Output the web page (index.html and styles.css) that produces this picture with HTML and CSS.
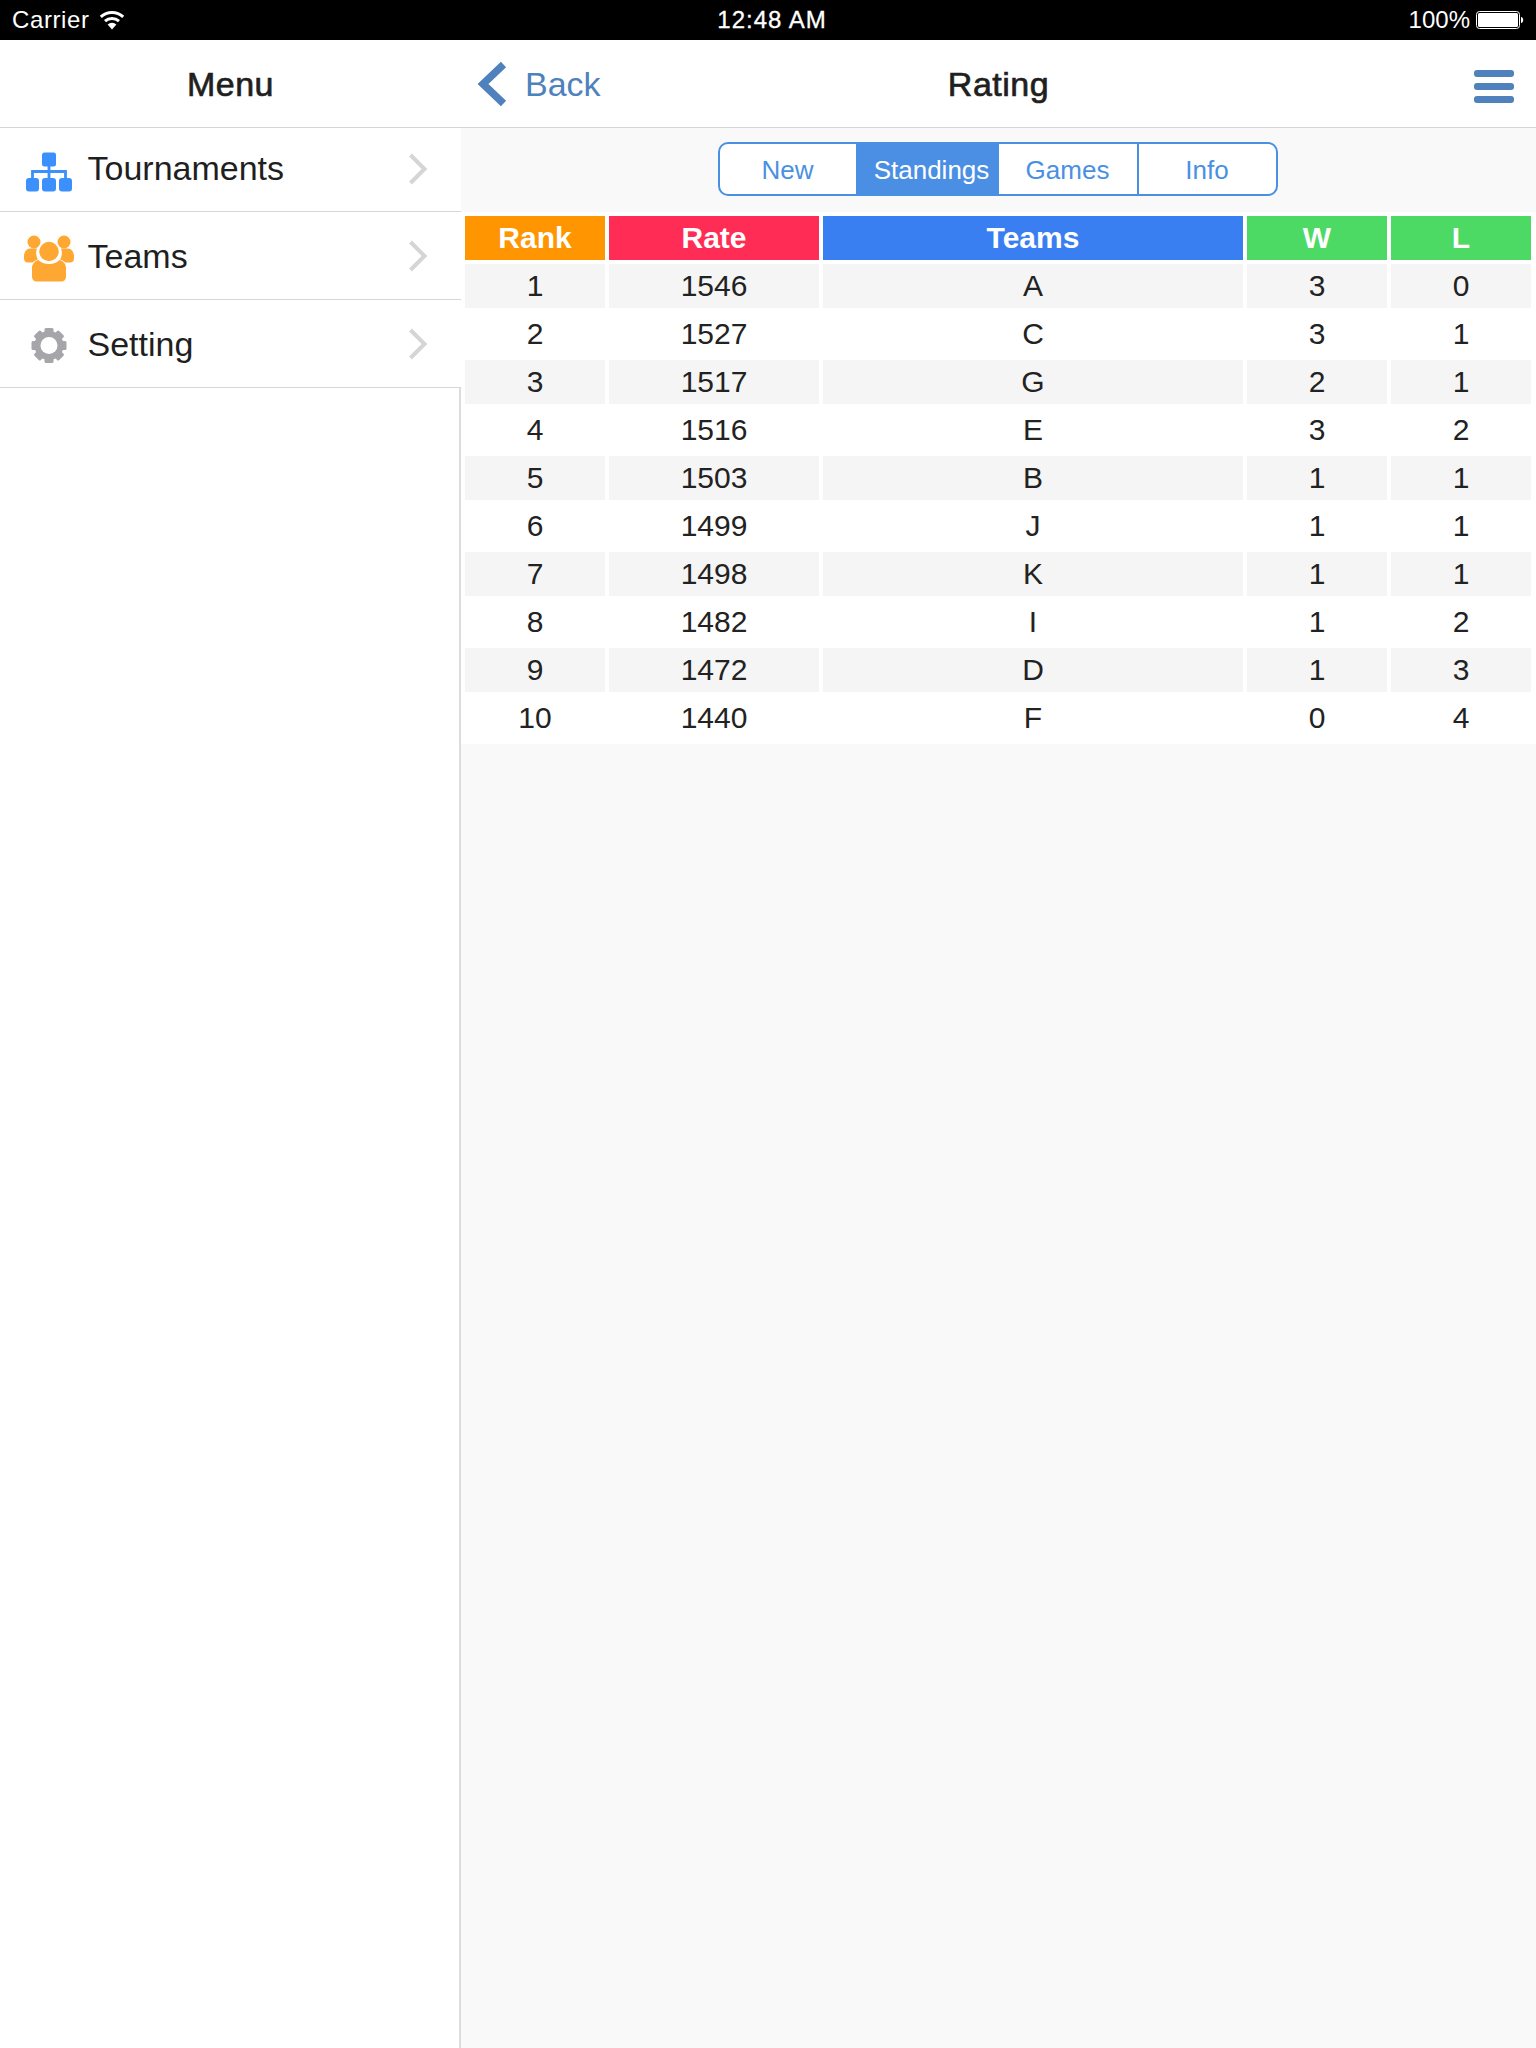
FILE: index.html
```html
<!DOCTYPE html>
<html lang="en">
<head>
<meta charset="utf-8">
<title>Rating</title>
<link rel="stylesheet" href="styles.css">
</head>
<body>
<div class="app">
  <header class="status">
    <div class="status-left">
      <span class="carrier">Carrier</span>
      <svg class="wifi" width="26" height="20" viewBox="0 0 26 20"><path d="M13 19.5 8.6 14.4a6.6 6.6 0 0 1 8.8 0Z" fill="#fff"/><path d="M6 11.2a10.500 10.500 0 0 1 14 0M1.800 6.800a16.500 16.500 0 0 1 22.400 0" fill="none" stroke="#fff" stroke-width="3"/></svg>
    </div>
    <span class="time">12:48 AM</span>
    <div class="status-right">
      <span class="percent">100%</span>
      <svg class="battery" width="50" height="20" viewBox="0 0 50 20"><rect x="1.500" y="1.500" width="43" height="17" rx="3" fill="none" stroke="#fff"/><rect x="3" y="3" width="40" height="14" rx="1.500" fill="#fff"/><path d="M46 7c1.400.3 2.200 1.400 2.200 3s-.8 2.700-2.200 3Z" fill="#fff"/></svg>
    </div>
  </header>
  <div class="columns">
    <aside class="side">
      <div class="nav nav-center"><h1 class="title">Menu</h1></div>
      <a class="row row-first">
        <span class="row-icon">
          <svg width="50" height="50" viewBox="0 0 50 50"><g fill="#3b90fb"><rect x="18" y="8.500" width="14" height="14" rx="2.500"/><rect x="2" y="34" width="13" height="13.500" rx="3"/><rect x="18" y="34" width="14" height="13.500" rx="3"/><rect x="35" y="34" width="13" height="13.500" rx="3"/></g><path d="M25 22v12M8.500 34v-6.500h33V34" fill="none" stroke="#3b90fb" stroke-width="2.800"/></svg>
        </span>
        <span class="row-label">Tournaments</span>
        <svg class="chev" width="20" height="32" viewBox="0 0 20 32"><path d="M2.500 2 16.500 16 2.500 30" fill="none" stroke="#d5d5d5" stroke-width="4"/></svg>
      </a>
      <a class="row">
        <span class="row-icon">
          <svg width="50" height="54" viewBox="0 0 50 54"><g fill="#ffa733"><circle cx="10" cy="13" r="6.500"/><circle cx="40" cy="13" r="6.500"/><path d="M0 27c0-4 3-7.500 6-7.500h7a13 13 0 0 0 2 12.500L13 33.500H4c-2.500 0-4-1.500-4-4Z"/><path d="M50 27c0-4-3-7.500-6-7.500h-7a13 13 0 0 1-2 12.500l2 1.500h9c2.500 0 4-1.500 4-4Z"/></g><circle cx="25" cy="22.500" r="11.200" fill="#fff"/><circle cx="25" cy="22.500" r="9.700" fill="#ffa733"/><path d="M7 39c0-4 2.500-7.500 7-8.500 2.500 2.800 6.500 4.200 11 4.200s8.500-1.400 11-4.200c4.500 1 7 4.500 7 8.500v9c0 3-2 5-5 5H12c-3 0-5-2-5-5Z" fill="#fff"/><path d="M8 39c0-4 2.500-7 6.500-8 2.500 2.500 6 4 10.500 4s8-1.500 10.500-4c4 1 6.500 4 6.500 8v8.500c0 3-2 5-5 5H13c-3 0-5-2-5-5Z" fill="#ffa733"/></svg>
        </span>
        <span class="row-label">Teams</span>
        <svg class="chev" width="20" height="32" viewBox="0 0 20 32"><path d="M2.500 2 16.500 16 2.500 30" fill="none" stroke="#d5d5d5" stroke-width="4"/></svg>
      </a>
      <a class="row">
        <span class="row-icon">
          <svg width="50" height="54" viewBox="0 0 50 54"><g fill="#a5a5aa" transform="translate(25 28.500)"><circle r="14.500"/><rect x="-4.500" y="-17.500" width="9" height="35" rx="1.500"/><rect x="-4.500" y="-17.500" width="9" height="35" rx="1.500" transform="rotate(45)"/><rect x="-4.500" y="-17.500" width="9" height="35" rx="1.500" transform="rotate(90)"/><rect x="-4.500" y="-17.500" width="9" height="35" rx="1.500" transform="rotate(135)"/></g><circle cx="25" cy="28.500" r="8.500" fill="#fff"/></svg>
        </span>
        <span class="row-label">Setting</span>
        <svg class="chev" width="20" height="32" viewBox="0 0 20 32"><path d="M2.500 2 16.500 16 2.500 30" fill="none" stroke="#d5d5d5" stroke-width="4"/></svg>
      </a>
      <div class="side-fill"></div>
    </aside>
    <main class="main">
      <div class="nav nav-main">
        <a class="back">
          <svg width="30" height="46" viewBox="0 0 30 46"><path d="M26.500 3.500 6 23l20.500 19.500" fill="none" stroke="#4f81bd" stroke-width="7.500"/></svg>
          <span>Back</span>
        </a>
        <h1 class="title">Rating</h1>
        <a class="menu-btn"><i></i><i></i><i></i></a>
      </div>
      <div class="content">
        <div class="segments">
          <a class="seg seg-new">New</a>
          <a class="seg seg-active">Standings</a>
          <a class="seg">Games</a>
          <a class="seg">Info</a>
        </div>
        <div class="table-wrap">
        <table class="standings">
          <colgroup><col class="c-s"><col class="c-m"><col class="c-l"><col class="c-s"><col class="c-s"></colgroup>
          <thead>
            <tr><th class="h-orange">Rank</th><th class="h-red">Rate</th><th class="h-blue">Teams</th><th class="h-green">W</th><th class="h-green">L</th></tr>
          </thead>
          <tbody>
            <tr><td>1</td><td>1546</td><td>A</td><td>3</td><td>0</td></tr>
            <tr><td>2</td><td>1527</td><td>C</td><td>3</td><td>1</td></tr>
            <tr><td>3</td><td>1517</td><td>G</td><td>2</td><td>1</td></tr>
            <tr><td>4</td><td>1516</td><td>E</td><td>3</td><td>2</td></tr>
            <tr><td>5</td><td>1503</td><td>B</td><td>1</td><td>1</td></tr>
            <tr><td>6</td><td>1499</td><td>J</td><td>1</td><td>1</td></tr>
            <tr><td>7</td><td>1498</td><td>K</td><td>1</td><td>1</td></tr>
            <tr><td>8</td><td>1482</td><td>I</td><td>1</td><td>2</td></tr>
            <tr><td>9</td><td>1472</td><td>D</td><td>1</td><td>3</td></tr>
            <tr><td>10</td><td>1440</td><td>F</td><td>0</td><td>4</td></tr>
          </tbody>
        </table>
        </div>
      </div>
    </main>
  </div>
</div>
</body>
</html>
```

FILE: styles.css
```css
* { box-sizing: border-box; }
html, body { margin: 0; padding: 0; }
body { font-family: "Liberation Sans", Arial, sans-serif; color: #1f1f1f; background: #fff; }
.app { width: 1536px; height: 2048px; display: flex; flex-direction: column; overflow: hidden; }

.status { height: 40px; background: #000; color: #fff; display: flex; align-items: center; justify-content: space-between; padding: 0 11px 0 12px; font-size: 24px; position: relative; }
.status-left, .status-right { display: flex; align-items: center; }
.carrier { letter-spacing: 0.6px; }
.wifi { margin-left: 9px; }
.time { position: absolute; left: 0; right: -8px; text-align: center; letter-spacing: 1px; -webkit-text-stroke: 0.3px #fff; }
.percent { letter-spacing: 0; }
.battery { margin-left: 5px; }

.columns { flex: 1; display: flex; min-height: 0; }
.side { width: 461px; flex: none; display: flex; flex-direction: column; }
.main { flex: 1; display: flex; flex-direction: column; background: #f9f9f9; }

.nav { height: 88px; flex: none; background: #fff; border-bottom: 1px solid #d6d4d4; display: flex; align-items: center; padding-top: 2px; }
.nav-center { justify-content: center; }
.nav-main { position: relative; justify-content: center; }
.title { margin: 0; font-size: 34px; font-weight: 400; letter-spacing: 0.5px; -webkit-text-stroke: 0.7px #1f1f1f; }

.back { position: absolute; left: 16px; top: 21px; display: flex; align-items: center; gap: 18px; font-size: 34px; color: #4f81bd; }
.menu-btn { position: absolute; left: 1013px; top: 30px; width: 40px; display: flex; flex-direction: column; gap: 6px; }
.menu-btn i { display: block; height: 7px; border-radius: 3px; background: #4f81bd; }

.row { display: flex; align-items: center; height: 88px; border-bottom: 1px solid #d8d8d8; background: #fff; padding: 1px 33px 0 0; }
.row-first { height: 84px; padding-bottom: 3px; }
.row-icon { width: 87.5px; padding-left: 24px; display: flex; align-items: center; }
.row-icon svg { display: block; }
.row-label { flex: 1; font-size: 34px; }
.chev { display: block; }
.side-fill { flex: 1; background: #fff; border-right: 2px solid #dcdcdc; }

.content { flex: 1; }
.segments { display: flex; width: 560px; height: 54px; margin: 14px auto 16px; border: 2px solid #4a90e2; border-radius: 10px; background: #fff; overflow: hidden; position: relative; left: -1px; }
.seg { width: 139px; display: flex; align-items: center; justify-content: center; font-size: 26px; color: #4a90e2; border-left: 2px solid #4a90e2; padding-top: 3px; }
.seg-new { width: 136px; border-left: 0; }
.seg-active { width: 141px; background: #4a8fe4; color: #fff; padding-left: 9px; }
.seg-active + .seg { width: 140px; }

.table-wrap { background: #fff; }
.standings { table-layout: fixed; width: 1074px; border-collapse: separate; border-spacing: 4px; }
.c-s { width: 140px; }
.c-m { width: 210px; }
.c-l { width: 420px; }
.standings th, .standings td { height: 44px; padding: 0; text-align: center; font-size: 30px; }
.standings th { color: #fff; font-weight: 700; }
.standings td { color: #222; }
.standings tbody tr:nth-child(odd) td { background: #f5f5f5; }
.h-orange { background: #ff9500; }
.h-red { background: #ff2d55; }
.h-blue { background: #3a7ff2; }
.h-green { background: #4cd964; }
```
